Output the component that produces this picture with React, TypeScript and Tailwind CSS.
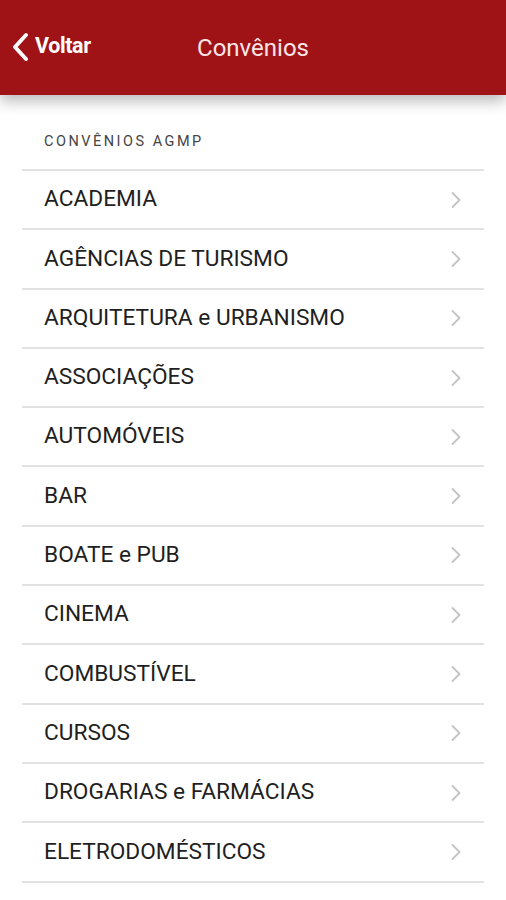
import React from "react";

const items = [
  "ACADEMIA",
  "AGÊNCIAS DE TURISMO",
  "ARQUITETURA e URBANISMO",
  "ASSOCIAÇÕES",
  "AUTOMÓVEIS",
  "BAR",
  "BOATE e PUB",
  "CINEMA",
  "COMBUSTÍVEL",
  "CURSOS",
  "DROGARIAS e FARMÁCIAS",
  "ELETRODOMÉSTICOS",
];

export default function App() {
  return (
    <div
      className="w-[506px] h-[900px] bg-white overflow-hidden"
      style={{ fontFamily: "Roboto, 'Liberation Sans', sans-serif" }}
    >
      <header className="relative z-10 h-[95px] bg-[#9f1317] grid grid-cols-[1fr_auto_1fr] items-center shadow-[0_6px_14px_rgba(0,0,0,0.28)]">
        <div className="flex items-center pl-[10px] pb-[2px]">
          <svg width="22" height="30" viewBox="0 0 22 30" className="mr-[3px]">
            <path
              d="M16 3 L5 15 L16 27"
              fill="none"
              stroke="#ffffff"
              strokeWidth="4"
              strokeLinecap="round"
              strokeLinejoin="round"
            />
          </svg>
          <span className="text-white text-[21.5px] font-bold tracking-[-0.4px]">Voltar</span>
        </div>
        <div className="text-[#fbe6e6] text-[24px] leading-none pt-[1px]">Convênios</div>
        <div />
      </header>
      <div className="pt-[40px]">
        <div className="pl-[44px] text-[#444] text-[14.5px] tracking-[2.5px] leading-none h-[34px]">
          CONVÊNIOS AGMP
        </div>
        <div className="mx-[22px] border-t-[2px] border-[#e2e2e2]">
          {items.map((t) => (
            <div
              key={t}
              className="h-[59.3px] border-b-[2px] border-[#e2e2e2] flex items-center justify-between pl-[22px] pr-[22px]"
            >
              <span className="text-[#1f1f1f] text-[22.7px] leading-none">{t}</span>
              <svg width="12" height="18" viewBox="0 0 12 18">
                <path
                  d="M2.5 2 L9.5 9 L2.5 16"
                  fill="none"
                  stroke="#c4c4c4"
                  strokeWidth="1.8"
                  strokeLinecap="round"
                  strokeLinejoin="round"
                />
              </svg>
            </div>
          ))}
        </div>
      </div>
    </div>
  );
}
